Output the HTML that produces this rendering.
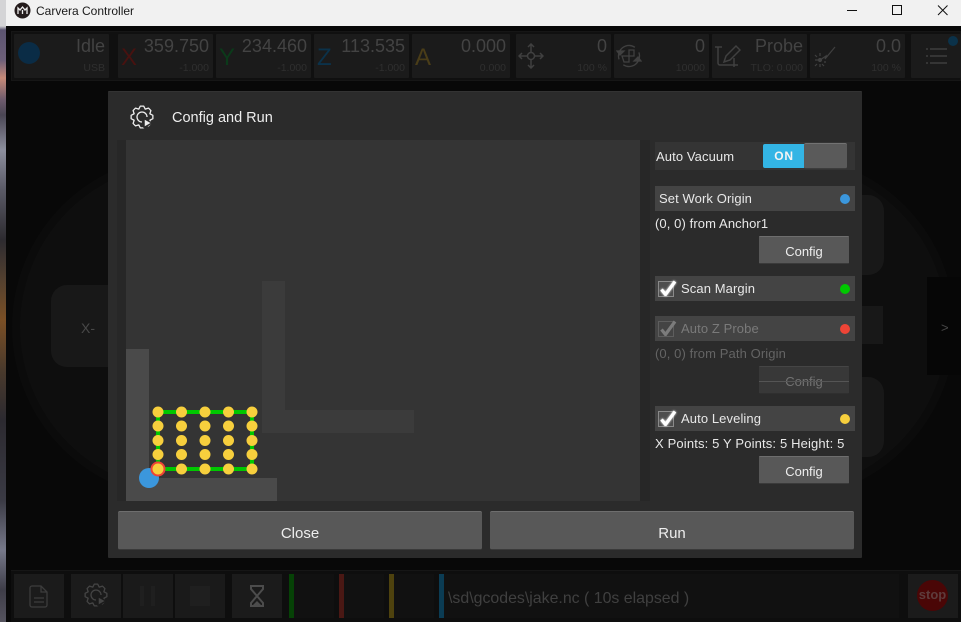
<!DOCTYPE html>
<html><head><meta charset="utf-8"><style>
*{box-sizing:border-box}
html,body{margin:0;padding:0;width:961px;height:622px;overflow:hidden;background:#080808;font-family:"Liberation Sans",sans-serif}
.a{position:absolute}
.t{position:absolute;white-space:nowrap;line-height:1}
.card{position:absolute;top:34px;height:44px;background:#1b1b1b;border-radius:1px}
.big{position:absolute;right:4px;top:3px;font-size:18px;line-height:18px;color:#434343;white-space:nowrap}
.small{position:absolute;right:4px;top:28px;font-size:10.5px;line-height:12px;color:#2f2f2f;white-space:nowrap}
.ax{position:absolute;left:3px;top:12px;font-size:24px;line-height:24px}
.row{position:absolute;left:655px;width:200px;height:25px;background:#444}
.lab{position:absolute;font-size:13px;line-height:15px;color:#e8e8e8;white-space:nowrap;letter-spacing:.1px}
.dot{position:absolute;width:10px;height:10px;border-radius:50%;left:185px;top:7.5px}
.btn{position:absolute;background:#585858;border-top:1px solid #6e6e6e;border-bottom:1px solid #3a3a3a;border-radius:1px;color:#eee;font-size:13px;text-align:center}
.bb{position:absolute;top:574px;height:44px;background:#1b1b1b;width:50px}
.grp{position:absolute;top:574px;height:44px;background:#111}
.ck{position:absolute;left:3px;top:5px;width:16px;height:16px;border:1px solid #8a8a8a;background:#4e4e4e}
.chk{filter:drop-shadow(0 0 1px #fff)}
</style></head><body>
<div class="a" style="left:0;top:0;width:6px;height:622px;background:linear-gradient(180deg,#d4d4d6 0,#d4d4d6 26px,#5b5470 30px,#6c5f78 60px,#c68a78 78px,#6d5b6d 100px,#4a4654 115px,#8d8f9e 150px,#5a5a66 190px,#2d2b30 240px,#53402f 280px,#7a4f25 320px,#4a3a2c 370px,#2c2a30 420px,#3a3a44 500px,#77798a 550px,#3e3d48 590px,#55535e 622px)"></div>
<div class="a" style="left:6px;top:0;width:955px;height:26px;background:#f1f1f1"></div>
<svg class="a" style="left:14px;top:2px" width="17" height="17" viewBox="0 0 17 17"><circle cx="8.500" cy="8.500" r="8" fill="#241c1c"/><path d="M4 12V6l2 2 2.500-3 2.500 3 2-2v6M8.500 8v4" stroke="#eee" stroke-width="1.300" fill="none"/></svg>
<div class="t" style="left:36px;top:4px;font-size:12px;line-height:14px;color:#1a1a1a">Carvera Controller</div>
<svg class="a" style="left:840px;top:0" width="121" height="26" viewBox="0 0 121 26" fill="none" stroke="#111" stroke-width="1"><path d="M7 10.500H17"/><rect x="52.500" y="5.500" width="9" height="9"/><path d="M98 5.500l9.500 9.500M107.500 5.500L98 15"/></svg>

<!-- top bar -->
<div class="a" style="left:11px;top:31px;width:950px;height:50px;background:#101010;border:1px solid #161616"></div>
<div class="card" style="left:14px;width:95px"><div class="a" style="left:4px;top:8px;width:22px;height:22px;border-radius:50%;background:radial-gradient(circle,#0a2c46 0,#0a2c46 68%,#13212b 78%,#1b1b1b 100%)"></div><div class="big">Idle</div><div class="small">USB</div></div>
<div class="card" style="left:118px;width:95px"><div class="ax" style="color:#481210">X</div><div class="big">359.750</div><div class="small">-1.000</div></div>
<div class="card" style="left:216px;width:95px"><div class="ax" style="color:#0b3a1a">Y</div><div class="big">234.460</div><div class="small">-1.000</div></div>
<div class="card" style="left:314px;width:95px"><div class="ax" style="color:#0b324a">Z</div><div class="big">113.535</div><div class="small">-1.000</div></div>
<div class="card" style="left:412px;width:98px"><div class="ax" style="color:#4a3d18">A</div><div class="big">0.000</div><div class="small">0.000</div></div>
<div class="card" style="left:516px;width:95px"><svg class="a" style="left:2px;top:9px" width="26" height="26" viewBox="0 0 26 26" fill="none" stroke="#404040" stroke-width="1.500"><circle cx="13" cy="13" r="3.500"/><path d="M13 1v8M13 17v8M1 13h8M17 13h8M10 4l3-3 3 3M10 22l3 3 3-3M4 10l-3 3 3 3M22 10l3 3-3 3"/></svg><div class="big">0</div><div class="small">100 %</div></div>
<div class="card" style="left:614px;width:95px"><svg class="a" style="left:2px;top:9px" width="26" height="26" viewBox="0 0 26 26" fill="none" stroke="#404040" stroke-width="1.300"><circle cx="13" cy="13" r="10.500" stroke-dasharray="26 7" transform="rotate(-20 13 13)"/><path d="M1 8h7L4 12zM25 18h-7l4-4z" fill="#404040"/><path d="M6 13h7V7h5v6h-5v6H8z"/></svg><div class="big">0</div><div class="small">10000</div></div>
<div class="card" style="left:712px;width:95px"><svg class="a" style="left:3px;top:10px" width="26" height="26" viewBox="0 0 26 26" fill="none" stroke="#404040" stroke-width="1.500"><path d="M0 3h7M3 3v16a2 2 0 0 0 2 2h18M19 14v9"/><path d="M9 18l2-6 10-10 4 4-10 10z"/></svg><div class="big">Probe</div><div class="small">TLO: 0.000</div></div>
<div class="card" style="left:810px;width:95px"><svg class="a" style="left:2px;top:9px" width="26" height="28" viewBox="0 0 26 28" fill="none" stroke="#404040" stroke-width="1.200"><path d="M8 17l6-4-1 3 10-12M3 17h3M14 19h-2M8 10v3M8 24v-3M3 12l2 2M3 23l2-2M12 23l-2-2"/><circle cx="8" cy="17" r="1.500" fill="#404040"/></svg><div class="big">0.0</div><div class="small">100 %</div></div>
<div class="card" style="left:911px;width:50px"><svg class="a" style="left:15px;top:13px" width="22" height="20" viewBox="0 0 22 20" stroke="#3e3e3e" stroke-width="1.500"><path d="M4 2h17M4 9h17M4 16h17M0 2h2M0 9h2M0 16h2"/></svg><div class="a" style="left:37px;top:2px;width:10px;height:10px;border-radius:50%;background:#0b324a"></div></div>

<!-- background jog -->
<div class="a" style="left:12px;top:155px;width:943px;height:344px;border-radius:172px;background:#0e0e0e;border:8px solid #0b0b0b"></div>
<div class="a" style="left:51px;top:285px;width:80px;height:82px;border-radius:16px;background:#181818"></div>
<div class="t" style="left:81px;top:321px;font-size:14px;color:#484848">X-</div>
<div class="a" style="left:840px;top:195px;width:44px;height:80px;border-radius:16px;background:#181818"></div>
<div class="a" style="left:840px;top:377px;width:44px;height:80px;border-radius:16px;background:#181818"></div>
<div class="a" style="left:840px;top:306px;width:43px;height:38px;background:#181818"></div>
<div class="a" style="left:927px;top:277px;width:34px;height:98px;background:#060606"></div>
<div class="t" style="left:941px;top:321px;font-size:13px;color:#484848">&gt;</div>

<!-- bottom bar -->
<div class="a" style="left:11px;top:570px;width:950px;height:52px;background:#0e0e0e;border-top:1px solid #161616"></div>
<div class="bb" style="left:14px"><svg class="a" style="left:15px;top:11px" width="20" height="24" viewBox="0 0 20 24" fill="none" stroke="#3c3c3c" stroke-width="1.300"><path d="M3 1h9l6 6v13a2 2 0 0 1-2 2H3a2 2 0 0 1-2-2V3a2 2 0 0 1 2-2zM12 1v6h6M5 13h10M5 17h10"/></svg></div>
<div class="bb" style="left:71px"><svg class="a" style="left:13px;top:9px" width="24" height="24" viewBox="0 0 24 24" fill="none" stroke="#444" stroke-width="1.300" stroke-linejoin="round"><path d="M10.280 1.140H13.720L15.250 4.150 18.470 3.100 20.900 5.530 19.850 8.750 22.860 10.280V13.720L19.850 15.250 20.900 18.470 18.470 20.900 15.250 19.850 13.720 22.860H10.280L8.750 19.850 5.530 20.900 3.100 18.470 4.150 15.250 1.140 13.720V10.280L4.150 8.750 3.100 5.530 5.530 3.100 8.750 4.150Z"/><path d="M12 17a5 5 0 1 1 5-5"/><path d="M14 13.500v9l8-4.500z" fill="#444" stroke="#1b1b1b" stroke-width="1.500"/></svg></div>
<div class="bb" style="left:123px;background:#1a1a1a"><div class="a" style="left:17px;top:12px;width:4px;height:20px;background:#1f1f1f"></div><div class="a" style="left:28px;top:12px;width:4px;height:20px;background:#1f1f1f"></div></div>
<div class="bb" style="left:175px;background:#1a1a1a"><div class="a" style="left:15px;top:12px;width:20px;height:20px;background:#1f1f1f"></div></div>
<div class="bb" style="left:232px"><svg class="a" style="left:17px;top:11px" width="16" height="22" viewBox="0 0 16 22" fill="none" stroke="#4c4c4c" stroke-width="2"><path d="M1 1h14M1 21h14M2 1v3l6 7 6-7V1M2 21v-3l6-7 6 7v3"/><path d="M4 20l4-4 4 4z" fill="#4c4c4c" stroke="none"/></svg></div>
<div class="grp" style="left:289px;width:45px"><div class="a" style="left:0;top:0;width:5px;height:44px;background:#064206"></div></div>
<div class="grp" style="left:339px;width:45px"><div class="a" style="left:0;top:0;width:5px;height:44px;background:#4a1814"></div></div>
<div class="grp" style="left:389px;width:45px"><div class="a" style="left:0;top:0;width:5px;height:44px;background:#4e420e"></div></div>
<div class="grp" style="left:439px;width:460px"><div class="a" style="left:0;top:0;width:5px;height:44px;background:#0b3c54"></div><div class="t" style="left:9px;top:16px;font-size:15.900px;line-height:17px;color:#404040">\sd\gcodes\jake.nc ( 10s elapsed )</div></div>
<div class="bb" style="left:908px;width:50px"><div class="a" style="left:9px;top:6px;width:31px;height:31px;border-radius:50%;background:#4a0606"></div><div class="t" style="left:9px;width:31px;text-align:center;top:14px;font-size:13px;font-weight:bold;color:#5e3c3c">stop</div></div>

<!-- modal -->
<div class="a" style="left:108px;top:91px;width:754px;height:467px;background:#2b2b2b;border-top:1px solid #333;border-radius:1px"></div>
<svg class="a" style="left:130px;top:105px" width="24" height="24" viewBox="0 0 24 24" fill="none" stroke="#eee" stroke-width="1.300" stroke-linejoin="round"><path d="M10.280 1.140H13.720L15.250 4.150 18.470 3.100 20.900 5.530 19.850 8.750 22.860 10.280V13.720L19.850 15.250 20.900 18.470 18.470 20.900 15.250 19.850 13.720 22.860H10.280L8.750 19.850 5.530 20.900 3.100 18.470 4.150 15.250 1.140 13.720V10.280L4.150 8.750 3.100 5.530 5.530 3.100 8.750 4.150Z"/><path d="M12 17a5 5 0 1 1 5-5"/><path d="M14 13.500v9l8-4.500z" fill="#eee" stroke="#2b2b2b" stroke-width="1.500"/></svg>
<div class="t" style="left:172px;top:110px;font-size:14.500px;line-height:16px;color:#eee">Config and Run</div>

<!-- canvas -->
<div class="a" style="left:117px;top:140px;width:9px;height:361px;background:#272727"></div>
<div class="a" style="left:126px;top:140px;width:514px;height:361px;background:#343434"></div>
<div class="a" style="left:640px;top:140px;width:10px;height:361px;background:#272727"></div>
<div class="a" style="left:262px;top:281px;width:23px;height:152px;background:#3b3b3b"></div>
<div class="a" style="left:262px;top:410px;width:152px;height:23px;background:#3b3b3b"></div>
<div class="a" style="left:126px;top:349px;width:23px;height:152px;background:#4a4a4a"></div>
<div class="a" style="left:126px;top:478px;width:151px;height:23px;background:#4a4a4a"></div>
<svg class="a" style="left:126px;top:400px" width="150" height="100" viewBox="0 0 150 100">
<circle cx="23" cy="78" r="10" fill="#3b97dd"/>
<rect x="32" y="12" width="94" height="57" fill="none" stroke="#00c800" stroke-width="4"/>
<circle cx="32" cy="69" r="7.500" fill="#ee4436"/>
<g fill="#f7cf3d">
<circle cx="32" cy="12" r="5.500"/><circle cx="55.500" cy="12" r="5.500"/><circle cx="79" cy="12" r="5.500"/><circle cx="102.500" cy="12" r="5.500"/><circle cx="126" cy="12" r="5.500"/>
<circle cx="32" cy="26" r="5.500"/><circle cx="55.500" cy="26" r="5.500"/><circle cx="79" cy="26" r="5.500"/><circle cx="102.500" cy="26" r="5.500"/><circle cx="126" cy="26" r="5.500"/>
<circle cx="32" cy="40.500" r="5.500"/><circle cx="55.500" cy="40.500" r="5.500"/><circle cx="79" cy="40.500" r="5.500"/><circle cx="102.500" cy="40.500" r="5.500"/><circle cx="126" cy="40.500" r="5.500"/>
<circle cx="32" cy="54.500" r="5.500"/><circle cx="55.500" cy="54.500" r="5.500"/><circle cx="79" cy="54.500" r="5.500"/><circle cx="102.500" cy="54.500" r="5.500"/><circle cx="126" cy="54.500" r="5.500"/>
<circle cx="32" cy="69" r="5.500"/><circle cx="55.500" cy="69" r="5.500"/><circle cx="79" cy="69" r="5.500"/><circle cx="102.500" cy="69" r="5.500"/><circle cx="126" cy="69" r="5.500"/>
</g></svg>

<!-- right panel -->
<div class="a" style="left:655px;top:142px;width:200px;height:28px;background:#343434"></div>
<div class="lab" style="left:656px;top:149px">Auto Vacuum</div>
<div class="a" style="left:763px;top:144px;width:42px;height:24px;background:#33b5e5;border-radius:2px 0 0 2px;color:#f4f4f4;font-size:12px;font-weight:bold;text-align:center;line-height:25px;letter-spacing:.8px">ON</div>
<div class="a" style="left:804px;top:143px;width:43px;height:26px;background:#5a5a5a;border-top:1px solid #727272;border-bottom:1px solid #3c3c3c;border-radius:2px"></div>

<div class="row" style="top:186px"><div class="lab" style="left:4px;top:5px">Set Work Origin</div><div class="dot" style="background:#3b97dd"></div></div>
<div class="lab" style="left:655px;top:216px">(0, 0) from Anchor1</div>
<div class="btn" style="left:759px;top:236px;width:90px;height:28px;line-height:29px">Config</div>

<div class="row" style="top:276px"><div class="ck"></div><svg class="a chk" style="left:4px;top:2px" width="18" height="18" viewBox="0 0 18 18"><path d="M2.500 11.500l4 5 9.500-13" fill="none" stroke="#fff" stroke-width="3.200"/></svg><div class="lab" style="left:26px;top:5px">Scan Margin</div><div class="dot" style="background:#00c800"></div></div>

<div class="row" style="top:316px"><div class="ck" style="background:#444;border-color:#5e5e5e"></div><svg class="a" style="left:4px;top:2px" width="18" height="18" viewBox="0 0 18 18"><path d="M2.500 11.500l4 5 9.500-13" fill="none" stroke="#7c7c7c" stroke-width="3.200"/></svg><div class="lab" style="left:26px;top:5px;color:#7a7a7a">Auto Z Probe</div><div class="dot" style="background:#ee4436"></div></div>
<div class="lab" style="left:655px;top:346px;color:#646464">(0, 0) from Path Origin</div>
<div class="btn" style="left:759px;top:366px;width:90px;height:28px;line-height:30px;background:#383838;border-top:1px solid #454545;border-bottom:1px solid #2f2f2f;color:#727272">Config<div class="a" style="left:0;top:14px;width:90px;height:1px;background:#555"></div></div>

<div class="row" style="top:406px"><div class="ck"></div><svg class="a chk" style="left:4px;top:2px" width="18" height="18" viewBox="0 0 18 18"><path d="M2.500 11.500l4 5 9.500-13" fill="none" stroke="#fff" stroke-width="3.200"/></svg><div class="lab" style="left:26px;top:5px">Auto Leveling</div><div class="dot" style="background:#f7cf3d"></div></div>
<div class="lab" style="left:655px;top:436px;letter-spacing:.15px">X Points: 5 Y Points: 5 Height: 5</div>
<div class="btn" style="left:759px;top:456px;width:90px;height:28px;line-height:29px">Config</div>

<div class="btn" style="left:118px;top:511px;width:364px;height:39px;line-height:43px;font-size:15px;border-radius:2px">Close</div>
<div class="btn" style="left:490px;top:511px;width:364px;height:39px;line-height:43px;font-size:15px;border-radius:2px">Run</div>
</body></html>
